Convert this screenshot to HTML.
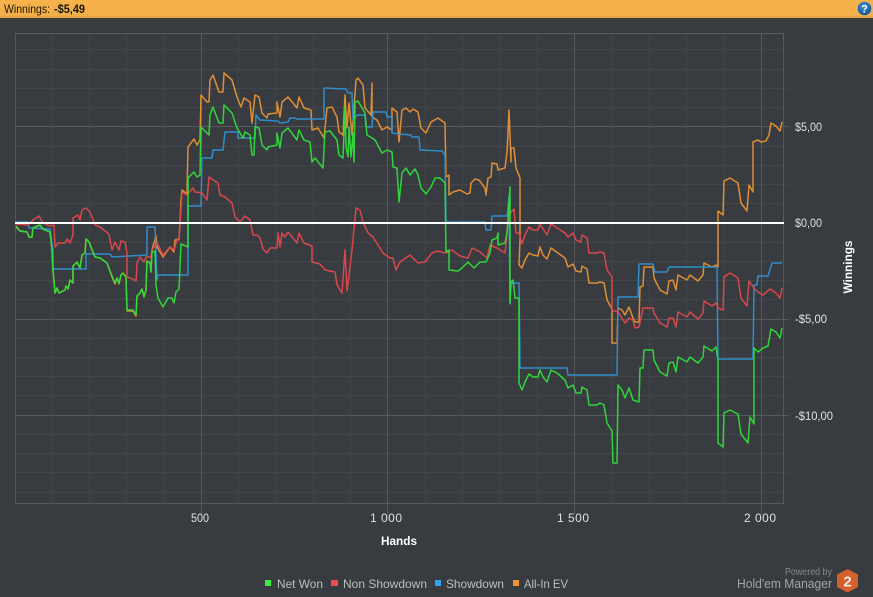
<!DOCTYPE html>
<html><head><meta charset="utf-8"><title>Winnings</title>
<style>
html,body{margin:0;padding:0;background:#383b3f;width:873px;height:597px;overflow:hidden}
svg{display:block}
text{font-family:"Liberation Sans",sans-serif}
</style></head><body>
<svg width="873" height="597" viewBox="0 0 873 597" xmlns="http://www.w3.org/2000/svg">
<defs><linearGradient id="h" x1="0" y1="0" x2="0" y2="1"><stop offset="0" stop-color="#f6b24c"/><stop offset=".85" stop-color="#f4af49"/><stop offset="1" stop-color="#dc9c42"/></linearGradient>
<radialGradient id="q" cx=".45" cy=".3" r=".8"><stop offset="0" stop-color="#3f8fd6"/><stop offset="1" stop-color="#0e4c8e"/></radialGradient></defs>
<rect width="873" height="597" fill="#383b3f"/>
<rect width="873" height="18" fill="url(#h)"/>
<text x="4" y="13" font-size="12" fill="#1c1608" textLength="46" lengthAdjust="spacingAndGlyphs">Winnings:</text>
<text x="54" y="13" font-size="12" font-weight="bold" fill="#1c1608" textLength="31" lengthAdjust="spacingAndGlyphs">-$5,49</text>
<circle cx="864.5" cy="8.5" r="6.8" fill="url(#q)"/>
<text x="864.5" y="12.5" font-size="11" font-weight="bold" fill="#fff" text-anchor="middle">?</text>

<path fill="none" stroke="#434649" stroke-width="1" d="M15 49.5H788M15 69.5H788M15 88.5H788M15 107.5H788M15 146.5H788M15 165.5H788M15 184.5H788M15 203.5H788M15 242.5H788M15 261.5H788M15 280.5H788M15 299.5H788M15 338.5H788M15 357.5H788M15 376.5H788M15 395.5H788M15 434.5H788M15 453.5H788M15 472.5H788M15 492.5H788
M51.5 33V507M89.5 33V507M126.5 33V507M163.5 33V507M238.5 33V507M275.5 33V507M313.5 33V507M350.5 33V507M425.5 33V507M462.5 33V507M499.5 33V507M537.5 33V507M612.5 33V507M649.5 33V507M686.5 33V507M724.5 33V507"/>
<path fill="none" stroke="#56595c" stroke-width="1" d="M15.5 33.5H783.5V503.5H15.5ZM15 126.5H789M15 319.5H789M15 415.5H789M201.5 33V515M387.5 33V515M574.5 33V515M761.5 33V515"/>

<g fill="none" stroke-width="1.5" stroke-linejoin="round">
<polyline stroke="#ec9535" stroke-opacity=".93" points="16,226 20,231 27,232 29,237 32,237 33,228 40,225 43,229 50,232 52,250 53,270 55,293 57,288 59,293 65,290 66,286 68,289 70,280 73,283 73,266 77,262 80,268 82,255 85,253 86,239 89,242 95,257 100,258 107,263 112,277 115,284 117,278 119,284 121,275 123,273 126,277 127,311 133,311 136,316 137,296 140,293 142,289 144,297 146,290 147,261 150,263 151,272 152,250 156,236 157,247 163,257 170,247 174,252 175,240 179,239 180,222 181,200 182,190 187,194 188,147 194,139 197,145 200,140 201,95 207,102 209,102 210,80 213,75 219,92 223,92 224,73 232,80 237,97 241,107 244,98 250,102 252,123 255,95 259,97 262,113 267,118 268,114 277,113 277,102 280,117 282,102 288,97 297,108 299,97 304,108 311,110 312,130 318,128 324,138 327,108 332,107 337,117 339,132 343,135 345,95 347,128 349,103 352,135 353,122 356,80 358,78 363,85 365,108 371,115 372,83 372,117 377,120 382,130 387,127 392,130 392,108 397,112 399,142 402,110 406,108 410,112 413,109 418,112 421,128 426,133 431,122 438,118 445,123 446,177 449,175 449,195 453,192 460,190 467,194 470,193 471,183 475,179 479,180 485,188 486,195 488,178 491,177 492,163 497,164 498,170 505,168 507,152 508,133 509,110 511,162 511,148 514,148 516,168 520,178 520,240 519,265 522,268 525,260 529,253 533,255 538,256 540,247 543,255 547,259 551,248 558,253 565,258 568,267 573,264 576,271 581,272 582,266 587,269 589,283 597,283 600,282 604,283 607,300 612,309 612,343 617,343 618,308 622,310 625,315 629,307 633,318 635,322 639,322 640,287 643,286 644,267 653,267 654,278 660,290 667,294 669,281 673,280 676,290 678,275 687,280 690,275 698,281 703,275 704,263 712,267 716,265 718,267 718,211 723,215 724,181 730,178 738,183 741,203 747,211 749,185 753,192 753,142 758,140 761,142 766,141 769,135 771,123 776,126 780,131 782,122"/>
<polyline stroke="#2f90d2" stroke-opacity=".95" points="16,222 28,222 29,228 50,229 53,250 53,269 86,269 86,254 110,254 112,257 147,255 147,227 155,227 157,280 158,275 188,275 188,206 201,206 202,158 212,158 213,150 223,150 225,132 238,132 238,138 255,138 256,115 260,120 278,121 280,123 288,122 290,118 295,118 297,119 324,119 324,88 346,89 348,93 352,93 353,120 357,115 365,115 366,127 372,127 373,112 386,112 387,117 392,117 392,133 399,134 411,135 412,137 419,137 420,150 442,151 445,155 446,222 485,222 486,230 491,230 492,216 507,216 509,197 510,304 511,283 519,283 520,368 567,368 568,375 617,375 618,297 638,297 639,264 653,264 655,272 667,272 669,267 717,267 718,359 753,359 754,285 757,285 758,276 768,276 772,263 782,263"/>
<polyline stroke="#e0484d" stroke-opacity=".95" points="16,224 28,225 33,220 39,216 43,223 50,226 54,225 55,247 58,243 65,243 67,239 70,243 73,235 73,218 78,215 80,220 82,210 86,208 90,212 95,225 100,227 109,234 112,250 115,242 119,250 121,241 125,242 127,253 127,277 133,279 136,281 137,263 140,257 144,262 146,257 151,257 152,250 157,243 163,255 170,247 174,250 177,240 179,240 180,223 182,192 187,195 193,188 195,192 202,193 207,200 209,177 213,180 218,183 220,195 225,197 232,203 235,217 240,222 245,216 250,220 253,235 257,235 260,238 263,249 267,253 270,248 277,248 278,233 280,247 282,233 285,237 288,232 297,243 299,233 304,243 312,246 312,262 320,264 325,270 335,272 337,285 342,293 345,250 347,291 352,250 356,208 360,210 363,222 368,233 373,237 383,253 390,258 393,258 396,270 400,262 410,255 418,263 425,262 432,253 438,251 445,253 448,252 452,250 460,256 468,258 472,248 480,252 487,258 490,245 497,248 505,253 507,233 508,220 511,212 514,209 516,233 519,233 522,244 525,235 529,227 533,230 538,230 540,224 547,235 551,224 565,233 568,237 573,233 576,240 581,242 582,235 587,238 589,253 597,253 600,252 604,253 607,270 612,277 612,310 618,312 622,318 625,323 629,318 633,320 635,328 639,327 643,308 653,308 654,313 660,323 667,327 669,318 673,318 676,327 678,312 687,317 690,312 698,319 703,313 704,301 712,306 716,303 718,308 723,310 724,277 730,273 738,278 741,298 747,306 749,281 754,288 758,292 763,295 770,289 776,293 780,298 782,288"/>
<polyline stroke="#2fdc3a" stroke-opacity=".96" points="16,227 20,231 27,232 29,237 32,237 33,228 40,225 43,229 50,232 52,250 53,270 55,293 57,288 59,293 65,290 66,286 68,289 70,280 73,283 73,266 77,262 80,268 82,255 85,253 86,239 89,242 95,257 100,258 107,263 112,276 115,283 117,278 119,283 121,275 123,273 126,277 127,310 133,310 136,315 137,296 140,293 142,289 144,297 146,290 147,261 150,263 151,272 152,252 155,251 156,285 158,298 163,307 168,298 172,298 174,303 176,292 179,289 181,244 188,247 188,178 194,172 197,177 200,175 201,127 207,133 209,135 210,115 213,107 219,123 223,123 224,105 232,113 237,128 243,138 245,132 250,135 252,155 254,155 255,127 259,128 262,145 267,150 268,147 277,145 277,133 280,148 282,133 288,128 297,140 299,130 304,140 310,142 312,162 315,158 323,168 325,132 330,131 337,140 339,155 343,158 345,107 346,147 348,157 349,127 351,157 353,133 354,162 355,102 358,101 365,113 367,135 372,138 375,140 382,153 387,150 392,152 393,167 397,168 399,202 402,173 406,168 410,175 415,169 418,175 421,188 426,194 431,187 435,178 440,178 445,183 446,252 449,250 449,270 458,271 462,268 468,262 474,268 480,262 486,262 490,253 492,240 497,238 498,233 498,245 505,243 507,233 508,220 510,187 510,303 511,282 513,280 515,298 519,298 519,383 522,390 525,382 529,374 533,377 538,377 540,370 543,377 547,382 551,370 557,373 565,380 568,388 573,385 576,393 581,393 582,387 587,390 589,405 597,405 600,403 604,405 607,423 612,431 613,463 617,463 618,385 622,390 625,398 629,388 633,400 639,402 640,368 643,368 644,350 653,350 654,360 660,372 667,376 669,363 673,362 676,372 678,357 687,362 690,357 698,363 703,357 704,346 712,351 716,347 718,360 718,443 723,447 724,413 730,410 738,414 741,434 748,443 750,417 754,424 754,348 758,352 763,348 768,346 771,329 776,332 780,338 782,328"/>
</g>
<rect x="15" y="222" width="769" height="2" fill="#fff"/>

<g font-size="12" fill="#e0e0e0">
<text x="795" y="131" textLength="27" lengthAdjust="spacingAndGlyphs">$5,00</text>
<text x="795" y="227" textLength="27" lengthAdjust="spacingAndGlyphs">$0,00</text>
<text x="795" y="323" textLength="32" lengthAdjust="spacingAndGlyphs">-$5,00</text>
<text x="795" y="420" textLength="38" lengthAdjust="spacingAndGlyphs">-$10,00</text>
<text x="191" y="522" textLength="18" lengthAdjust="spacingAndGlyphs">500</text>
<text x="370" y="522" textLength="32">1 000</text>
<text x="557" y="522" textLength="32">1 500</text>
<text x="744" y="522" textLength="32">2 000</text>
</g>
<text x="399" y="545" font-size="12" font-weight="bold" fill="#fff" text-anchor="middle" textLength="36" lengthAdjust="spacingAndGlyphs">Hands</text>
<text transform="translate(852,267) rotate(-90)" font-size="12" font-weight="bold" fill="#fff" text-anchor="middle" textLength="53" lengthAdjust="spacingAndGlyphs">Winnings</text>

<rect x="265" y="580" width="6" height="6" fill="#35ef3c"/>
<text x="277" y="588" font-size="12" fill="#bdbfc1" textLength="46" lengthAdjust="spacingAndGlyphs">Net Won</text>
<rect x="331" y="580" width="7" height="6" fill="#ee4b50"/>
<text x="343" y="588" font-size="12" fill="#bdbfc1" textLength="84" lengthAdjust="spacingAndGlyphs">Non Showdown</text>
<rect x="435" y="580" width="6" height="6" fill="#35a4ea"/>
<text x="446" y="588" font-size="12" fill="#bdbfc1" textLength="58" lengthAdjust="spacingAndGlyphs">Showdown</text>
<rect x="513" y="580" width="6" height="6" fill="#f0932f"/>
<text x="524" y="588" font-size="12" fill="#bdbfc1" textLength="44" lengthAdjust="spacingAndGlyphs">All-In EV</text>

<text x="785" y="575" font-size="10" fill="#85888a" textLength="47" lengthAdjust="spacingAndGlyphs">Powered by</text>
<text x="737" y="588" font-size="13" fill="#a2a4a6" textLength="95" lengthAdjust="spacingAndGlyphs">Hold'em Manager</text>
<polygon points="847.5,569 858,574.5 858,587 847.5,592.5 837,587 837,574.5" fill="#d5602c"/>
<text x="847.5" y="586.5" font-size="15" font-weight="bold" fill="#f4ece4" text-anchor="middle">2</text>
</svg>
</body></html>
